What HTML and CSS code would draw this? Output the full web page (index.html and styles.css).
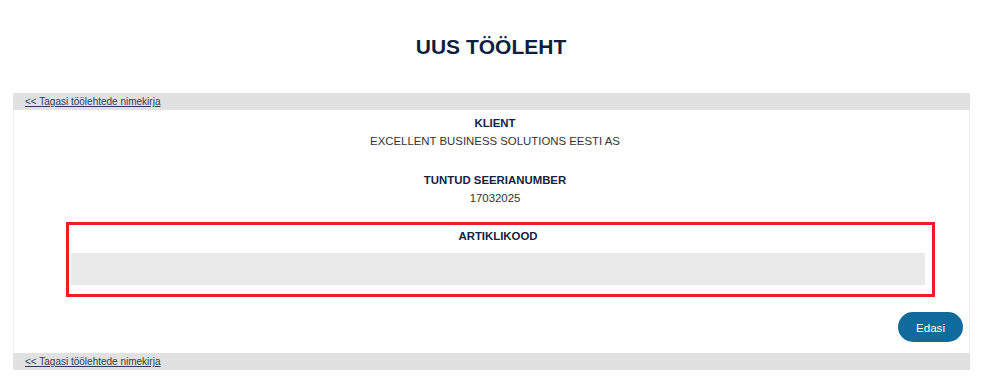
FILE: index.html
```html
<!DOCTYPE html>
<html lang="et">
<head>
    <meta charset="UTF-8">
    <meta name="viewport" content="width=device-width, initial-scale=1.0">
    <title>Uus tööleht</title>
    <link rel="stylesheet" href="styles.css">
</head>
<body>

    <h1 class="page-title">UUS TÖÖLEHT</h1>

    <div class="sheet">
        <div class="back-bar">
            <a href="#">&lt;&lt; Tagasi töölehtede nimekirja</a>
        </div>

        <div class="sheet-body">
            <div class="field">
                <div class="field-label">KLIENT</div>
                <div class="field-value">EXCELLENT BUSINESS SOLUTIONS EESTI AS</div>
            </div>

            <div class="field">
                <div class="field-label">TUNTUD SEERIANUMBER</div>
                <div class="field-value">17032025</div>
            </div>

            <div class="code-box">
                <label class="field-label" for="code">ARTIKLIKOOD</label>
                <input id="code" type="text" class="code-input">
            </div>

            <div class="actions">
                <button class="next-btn">Edasi</button>
            </div>
        </div>

        <div class="back-bar">
            <a href="#">&lt;&lt; Tagasi töölehtede nimekirja</a>
        </div>
    </div>

</body>
</html>
```

FILE: styles.css
```css
:root {
    --navy: #0d1f40;
    --ink: #333;
    --bar: #e1e1e1;
    --line: #efefef;
    --red: #ee1c25;
    --blue: #0f6b9c;
}

body {
    margin: 0;
    font-family: 'Liberation Sans', Arial, sans-serif;
    font-size: 11.4px;
    color: var(--ink);
    background: #fff;
}

.page-title {
    margin: 0;
    padding: 35px 0 0;
    height: 24px;
    margin-bottom: 34px;
    line-height: 24px;
    font-size: 21px;
    text-align: center;
    color: var(--navy);
}

.sheet {
    margin: 0 12px 0 13px;
}

.back-bar {
    height: 17px;
    line-height: 17px;
    padding-left: 12px;
    background: var(--bar);
    font-size: 10px;
}

.back-bar a {
    color: #2e3b55;
}

.sheet-body {
    border-left: 1px solid var(--line);
    border-right: 1px solid var(--line);
    padding: 4px 0 11px 7px;
}

.field {
    text-align: center;
    line-height: 18px;
    margin-bottom: 21px;
}

.field + .field {
    margin-bottom: 15px;
}

.field-label {
    display: block;
    font-weight: bold;
    color: #15223f;
    line-height: 18px;
}

.code-box {
    margin: 0 34px 0 45px;
    border: 3px solid var(--red);
    padding: 2px 7px 9px 2px;
    text-align: center;
}

.code-input {
    display: block;
    box-sizing: border-box;
    width: 100%;
    height: 32px;
    margin-top: 8px;
    border: none;
    background: #eaeaea;
}

.actions {
    display: flex;
    justify-content: flex-end;
    margin-top: 15px;
    padding-right: 6px;
}

.next-btn {
    width: 65px;
    height: 30px;
    border: none;
    border-radius: 15px;
    background: var(--blue);
    color: #fff;
    font-family: inherit;
    font-size: 11.6px;
    cursor: pointer;
}
```
